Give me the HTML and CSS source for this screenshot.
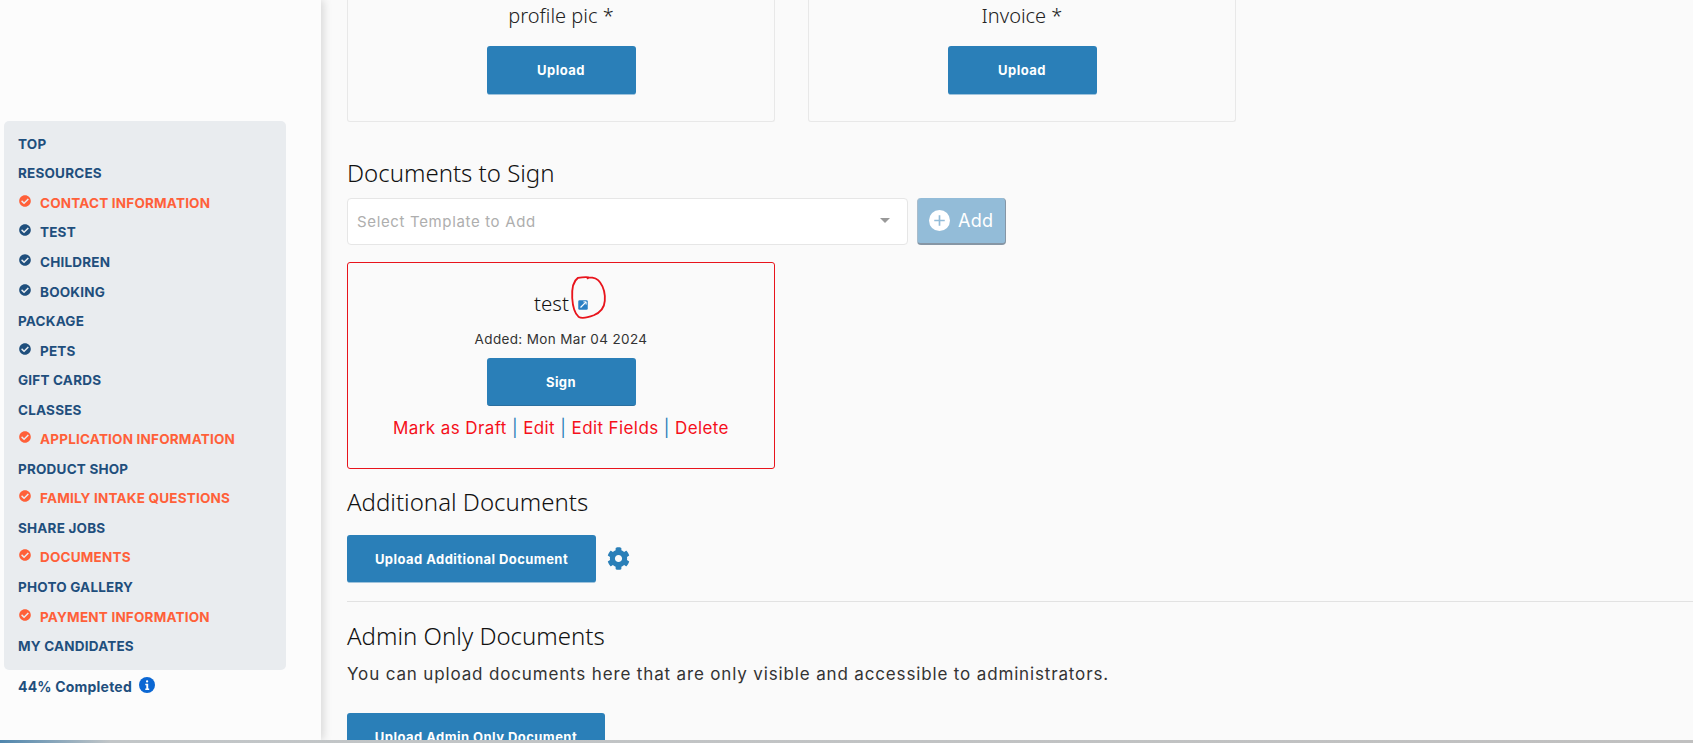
FILE: index.html
```html
<!DOCTYPE html>
<html lang="en">
<head>
<meta charset="utf-8">
<title>Documents</title>
<link rel="stylesheet" href="styles.css">
</head>
<body>
<svg class="defs" width="0" height="0" aria-hidden="true">
  <symbol id="check" viewBox="0 0 512 512"><path fill="currentColor" d="M504 256c0 137-111 248-248 248S8 393 8 256 119 8 256 8s248 111 248 248zM227 387l184-184c6-6 6-16 0-23l-23-22c-6-6-16-6-23 0L216 308l-70-70c-6-6-16-6-23 0l-22 23c-6 6-6 16 0 22l104 104c6 6 16 6 22 0z"/></symbol>
</svg>
<div class="page">
  <aside class="side">
    <nav class="nav">
      <a class="item">TOP</a>
      <a class="item">RESOURCES</a>
      <a class="item hot"><svg class="tick"><use href="#check"/></svg>CONTACT INFORMATION</a>
      <a class="item"><svg class="tick"><use href="#check"/></svg>TEST</a>
      <a class="item"><svg class="tick"><use href="#check"/></svg>CHILDREN</a>
      <a class="item"><svg class="tick"><use href="#check"/></svg>BOOKING</a>
      <a class="item">PACKAGE</a>
      <a class="item"><svg class="tick"><use href="#check"/></svg>PETS</a>
      <a class="item">GIFT CARDS</a>
      <a class="item">CLASSES</a>
      <a class="item hot"><svg class="tick"><use href="#check"/></svg>APPLICATION INFORMATION</a>
      <a class="item">PRODUCT SHOP</a>
      <a class="item hot"><svg class="tick"><use href="#check"/></svg>FAMILY INTAKE QUESTIONS</a>
      <a class="item">SHARE JOBS</a>
      <a class="item hot"><svg class="tick"><use href="#check"/></svg>DOCUMENTS</a>
      <a class="item">PHOTO GALLERY</a>
      <a class="item hot"><svg class="tick"><use href="#check"/></svg>PAYMENT INFORMATION</a>
      <a class="item">MY CANDIDATES</a>
    </nav>
    <div class="progress">44% Completed
      <svg class="info" viewBox="0 0 16 16"><circle cx="8" cy="8" r="8" fill="#0b67d3"/><rect x="7" y="3.2" width="2.2" height="2.2" rx="1" fill="#fff"/><path d="M6.3 6.8h2.9v4.7h1v1.4H6.3v-1.4h1V8.2h-1z" fill="#fff"/></svg>
    </div>
  </aside>
  <main class="main">
    <div class="uploads">
      <div class="upload-card">
        <div class="card-title">profile pic *</div>
        <button class="btn btn-upload">Upload</button>
      </div>
      <div class="upload-card">
        <div class="card-title">Invoice *</div>
        <button class="btn btn-upload">Upload</button>
      </div>
    </div>
    <h2 class="heading h-sign">Documents to Sign</h2>
    <div class="add-row">
      <div class="select">
        <span>Select Template to Add</span>
        <i class="caret"></i>
      </div>
      <button class="add-btn">
        <svg class="plus" viewBox="0 0 20 20"><circle cx="10" cy="10" r="10" fill="#fff"/><path d="M10 5v10M5 10h10" stroke="#93bcd8" stroke-width="1.6"/></svg>
        Add
      </button>
    </div>
    <div class="doc-card">
      <div class="doc-title">test<svg class="ext" viewBox="0 0 12 12"><rect x="0.3" y="0.3" width="11.4" height="11.4" rx="1.5" fill="#2a7fc4"/><path d="M6.500 2.200h3.300v3.300" fill="none" stroke="#fff" stroke-width="1.100"/><path d="M9.500 2.500L3 9" fill="none" stroke="#fff" stroke-width="1.500"/></svg></div>
      <div class="doc-date">Added: Mon Mar 04 2024</div>
      <button class="btn btn-sign">Sign</button>
      <div class="doc-links"><a>Mark as Draft</a> <span>|</span> <a>Edit</a> <span>|</span> <a>Edit Fields</a> <span>|</span> <a>Delete</a></div>
      <svg class="scribble" viewBox="0 0 38 48"><path d="M18 3.500C22 1.500 13 2 8 3 3.500 6 1.500 14 2 24c.5 8 1.500 15 6.500 19.500 3 2 8 1.500 16-1.500 6-2.500 11-7 11.500-15 .5-7-1-14-5-19.500-2-3-7-5-12-5" fill="none" stroke="#e8141c" stroke-width="1.900" stroke-linecap="round"/></svg>
    </div>
    <h2 class="heading h-add">Additional Documents</h2>
    <div class="additional">
      <button class="btn btn-additional">Upload Additional Document</button>
      <svg class="gear" viewBox="0 0 512 512"><path fill="#2a7fb8" d="M487.4 315.7l-42.6-24.6c4.3-23.2 4.3-47 0-70.2l42.6-24.6c4.9-2.8 7.1-8.6 5.5-14-11.1-35.6-30-67.8-54.7-94.6-3.8-4.1-10-5.1-14.8-2.3L380.8 110c-17.9-15.4-38.5-27.3-60.8-35.1V25.8c0-5.6-3.9-10.5-9.4-11.7-36.7-8.2-74.3-7.8-109.2 0-5.5 1.2-9.4 6.1-9.4 11.7V75c-22.2 7.9-42.8 19.8-60.8 35.1L88.7 85.5c-4.9-2.8-11-1.9-14.8 2.3-24.7 26.7-43.6 58.9-54.7 94.6-1.7 5.4.6 11.2 5.5 14L67.3 221c-4.3 23.2-4.3 47 0 70.2l-42.6 24.6c-4.9 2.8-7.1 8.6-5.5 14 11.1 35.6 30 67.8 54.7 94.6 3.8 4.1 10 5.1 14.8 2.3l42.6-24.6c17.9 15.4 38.5 27.3 60.8 35.1v49.2c0 5.6 3.9 10.5 9.4 11.7 36.7 8.2 74.3 7.8 109.2 0 5.5-1.2 9.4-6.1 9.4-11.7v-49.2c22.2-7.9 42.8-19.8 60.8-35.1l42.6 24.6c4.9 2.8 11 1.9 14.8-2.3 24.7-26.7 43.6-58.9 54.7-94.6 1.5-5.5-.7-11.3-5.6-14.1zM256 336c-44.1 0-80-35.9-80-80s35.9-80 80-80 80 35.9 80 80-35.9 80-80 80z"/></svg>
    </div>
    <hr class="rule">
    <h2 class="heading h-admin">Admin Only Documents</h2>
    <p class="note">You can upload documents here that are only visible and accessible to administrators.</p>
    <button class="btn btn-admin">Upload Admin Only Document</button>
  </main>
</div>
<div class="scrollbar"></div>
</body>
</html>
```

FILE: styles.css
```css
* { box-sizing: border-box; }
html, body { margin: 0; height: 100%; overflow: hidden; }
body {
  display: flex;
  flex-direction: column;
  font-family: "Inter", "Liberation Sans", sans-serif;
  background: #fafafa;
  color: #222;
}
.defs { position: absolute; }
.page { flex: 1; display: flex; min-height: 0; }

.side {
  width: 321px;
  flex: none;
  background: #fcfcfc;
  padding: 121px 35px 0 4px;
  box-shadow: 3px 0 8px rgba(0,0,0,.13);
  position: relative;
  z-index: 1;
}
.nav {
  background: #e9ecef;
  border-radius: 5px;
  height: 549px;
  padding: 8px 14px 0;
  display: flex;
  flex-direction: column;
}
.item {
  height: 29.55px;
  flex: none;
  display: flex;
  align-items: center;
  font-size: 13.5px;
  font-weight: 700;
  letter-spacing: .2px;
  color: #1f4f7d;
  white-space: nowrap;
}
.item.hot { color: #ff6039; }
.tick {
  width: 12px;
  height: 12px;
  margin: -4px 9px 0 1px;
  flex: none;
}
.progress {
  display: flex;
  align-items: center;
  gap: 7px;
  margin: 8px 0 0 14px;
  font-size: 14px;
  font-weight: 700;
  letter-spacing: .2px;
  color: #1f4f7d;
  white-space: nowrap;
}
.info { width: 16px; height: 16px; margin-top: -3px; }

.main {
  flex: 1;
  min-width: 0;
  padding-left: 26px;
  background: #fafafa;
}
.uploads { display: flex; gap: 33px; height: 122px; }
.upload-card {
  width: 428px;
  border: 1px solid #e8e8e8;
  border-top: 0;
  border-radius: 0 0 3px 3px;
  display: flex;
  flex-direction: column;
  align-items: center;
}
.card-title {
  font-family: "Noto Sans", sans-serif;
  font-size: 20px;
  font-weight: 300;
  line-height: 32px;
  color: #222;
  margin-bottom: 14px;
}
.btn {
  display: block;
  border: 0;
  border-bottom: 1px solid #9fc3dc;
  border-radius: 3px;
  background: #2a7fb8;
  color: #fff;
  font-family: "Inter", "Liberation Sans", sans-serif;
  font-weight: 700;
  font-size: 13px;
  letter-spacing: .45px;
  padding: 0;
}
.btn-upload { width: 149px; height: 49px; }
.heading {
  margin: 0;
  font-family: "Noto Sans", sans-serif;
  font-weight: 300;
  font-size: 24px;
  line-height: 32px;
  color: #111;
  white-space: nowrap;
}
.h-sign { margin-top: 35px; }
.add-row { display: flex; gap: 9px; margin-top: 9px; height: 47px; }
.select {
  width: 561px;
  background: #fff;
  border: 1px solid #e6e6e6;
  border-radius: 4px;
  padding: 0 9px;
  display: flex;
  align-items: center;
  justify-content: space-between;
  font-size: 15px;
  letter-spacing: .65px;
  color: #aeaeae;
}
.caret {
  width: 0;
  height: 0;
  border-left: 5px solid transparent;
  border-right: 5px solid transparent;
  border-top: 5px solid #999;
  margin: -3px 8px 0 0;
}
.add-btn {
  width: 89px;
  border: 0;
  border-right: 1px solid #8696a5;
  border-bottom: 2px solid #8696a5;
  border-left: 1px solid #a9bccb;
  border-radius: 4px;
  background: #93bcd8;
  color: #fff;
  font-family: "Inter", sans-serif;
  font-size: 18px;
  font-weight: 400;
  letter-spacing: .3px;
  display: flex;
  align-items: center;
  gap: 8px;
  padding: 0 0 0 11px;
}
.plus { width: 21px; height: 21px; flex: none; }
.doc-card {
  position: relative;
  width: 428px;
  height: 207px;
  margin-top: 17px;
  border: 1px solid #e8141c;
  border-radius: 3px;
  display: flex;
  flex-direction: column;
  align-items: center;
  padding-top: 25px;
}
.doc-title {
  display: flex;
  align-items: center;
  font-family: "Noto Sans", sans-serif;
  font-weight: 300;
  font-size: 20.5px;
  line-height: 30px;
  color: #111;
  height: 30px;
}
.ext { width: 10px; height: 10px; margin: 3px 0 0 9px; }
.doc-date { font-size: 13.5px; line-height: 20px; letter-spacing: .36px; color: #333; margin-top: 11px; }
.btn-sign { width: 149px; height: 48px; margin-top: 9px; border-bottom-color: #2a6f9f; }
.doc-links { margin-top: 11px; font-size: 17px; line-height: 22px; letter-spacing: .4px; white-space: nowrap; color: #2a7fb8; }
.doc-links a { color: #f5101a; }
.scribble { position: absolute; left: 222px; top: 12px; width: 37px; height: 46px; }
.h-add { margin-top: 17px; }
.additional { display: flex; align-items: center; gap: 11px; margin-top: 17px; }
.btn-additional { width: 249px; height: 48px; }
.gear { width: 23px; height: 23px; margin-top: -1px; }
.rule { margin: 18px 0 0; border: 0; border-top: 1px solid #e2e2e2; }
.h-admin { margin-top: 18px; }
.note { margin: 9px 0 0; font-size: 17px; line-height: 26px; letter-spacing: .85px; color: #333; white-space: nowrap; }
.btn-admin { width: 258px; height: 48px; margin-top: 26px; }
.scrollbar {
  flex: none;
  height: 3px;
  background: linear-gradient(90deg, #4f86ad 0, #c2c6c8 110px, #c0c0c0 100%);
  position: relative;
  z-index: 2;
}
```
